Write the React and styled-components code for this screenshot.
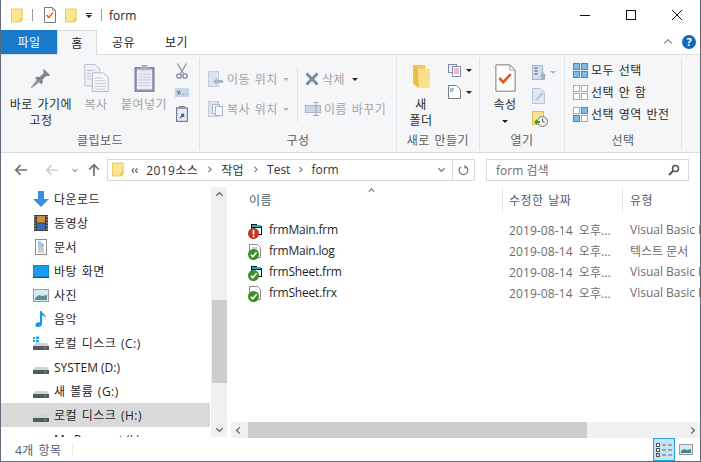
import styled, { createGlobalStyle } from "styled-components";
import { BiChevronUp, BiChevronDown, BiChevronLeft, BiChevronRight } from "react-icons/bi";

const Global = createGlobalStyle`
  html, body { margin: 0; padding: 0; background: #fff; overflow: hidden; }
  body { font-family: "Open Sans", "Noto Sans CJK KR", sans-serif; font-size: 12px; color: #1e1e1e; }
`;

const Window = styled.div`
  width: 701px;
  height: 462px;
  box-sizing: border-box;
  border: 1px solid #5f6b78;
  border-top: 0;
  display: flex;
  flex-direction: column;
  overflow: hidden;
  background: #fff;
`;

const TitleBar = styled.div`
  height: 30px;
  display: flex;
  align-items: center;
  padding-left: 10px;
  gap: 9px;
  flex: none;
`;
const TitleSep = styled.span`
  width: 1px;
  height: 12px;
  background: #9a9a9a;
`;
const QuickDoc = styled.span`
  margin-left: 2px;
  line-height: 0;
`;
const QuickMenu = styled.span`
  display: flex;
  flex-direction: column;
  align-items: center;
  gap: 1px;
  &::before {
    content: "";
    width: 6px;
    height: 1px;
    background: #222;
  }
`;
const TitleText = styled.span`
  font-size: 12px;
  color: #222;
  margin-left: -2px;
`;
const WindowButtons = styled.div`
  margin-left: auto;
  display: flex;
`;
const WindowButton = styled.div`
  width: 46px;
  height: 30px;
  display: flex;
  align-items: center;
  justify-content: center;
`;

const TabRow = styled.div`
  height: 25px;
  display: flex;
  flex: none;
  position: relative;
  border-bottom: 1px solid #dadbdc;
  box-sizing: border-box;
`;
const Tab = styled.div`
  width: ${(p) => p.$w}px;
  box-sizing: border-box;
  display: flex;
  align-items: center;
  justify-content: center;
  font-size: 12px;
  letter-spacing: 0.5px;
  height: ${(p) => (p.$active ? 25 : 24)}px;
  color: ${(p) => (p.$file ? "#fff" : "#222")};
  background: ${(p) => (p.$file ? "#1979ca" : p.$active ? "#f5f6f7" : "transparent")};
  border: ${(p) => (p.$active ? "1px solid #dadbdc" : "0")};
  border-bottom: 0;
  z-index: 1;
`;
const TabTools = styled.div`
  margin-left: auto;
  display: flex;
  align-items: center;
  gap: 5px;
  padding-right: 4px;
  height: 24px;
  color: #9a9a9a;
`;
const HelpBadge = styled.div`
  width: 14px;
  height: 14px;
  border-radius: 50%;
  background: #1368bd;
  color: #fff;
  font-size: 11px;
  font-weight: 700;
  line-height: 14px;
  text-align: center;
`;

const Ribbon = styled.div`
  height: 98px;
  background: #f5f6f7;
  border-bottom: 1px solid #dadbdc;
  box-sizing: border-box;
  display: flex;
  flex: none;
  padding-top: 3px;
  letter-spacing: 0.5px;
  word-spacing: 1px;
`;
const Group = styled.div`
  width: ${(p) => p.$w}px;
  box-sizing: border-box;
  border-right: 1px solid #e1e3e6;
  display: flex;
  flex-direction: column;
  height: 92px;
`;
const GroupBody = styled.div`
  flex: 1;
  display: flex;
  padding-left: ${(p) => p.$pl || 0}px;
  gap: ${(p) => p.$gap || 0}px;
  min-height: 0;
`;
const GroupLabel = styled.div`
  height: 19px;
  line-height: 19px;
  text-align: center;
  color: #5d5d5d;
  font-size: 12px;
  white-space: nowrap;
`;
const LargeButton = styled.div`
  width: ${(p) => p.$w}px;
  display: flex;
  flex-direction: column;
  align-items: center;
  padding-top: 4px;
  line-height: 16px;
  text-align: center;
  white-space: nowrap;
  color: ${(p) => (p.$off ? "#a2a2a2" : "#2b2b2b")};
`;
const LargeIcon = styled.div`
  height: 32px;
  margin-bottom: 3px;
  display: flex;
  align-items: center;
  justify-content: center;
`;
const ArrowLine = styled.div`
  height: 16px;
  display: flex;
  align-items: center;
`;
const SmallColumn = styled.div`
  display: flex;
  flex-direction: column;
  align-items: ${(p) => p.$align || "stretch"};
  gap: ${(p) => p.$gap || 0}px;
  padding-top: ${(p) => p.$pt || 0}px;
  ${(p) => (p.$w ? `width: ${p.$w}px;` : "")}
`;
const SmallButton = styled.div`
  height: ${(p) => p.$h || 22}px;
  display: flex;
  align-items: center;
  gap: 3px;
  white-space: nowrap;
  color: ${(p) => (p.$off ? "#a2a2a2" : "#2b2b2b")};
`;
const Divider = styled.div`
  width: 1px;
  height: 55px;
  background: #dfe1e4;
  margin: 9px 7px 0 7px;
`;
const Arrow = styled.span`
  width: 0;
  height: 0;
  border-left: 3px solid transparent;
  border-right: 3px solid transparent;
  border-top: 3px solid ${(p) => (p.$off ? "#b5b5b5" : "#222")};
  margin-left: ${(p) => p.$ml || 0}px;
  flex: none;
`;

const NavBar = styled.div`
  height: 34px;
  display: flex;
  align-items: center;
  flex: none;
  padding-bottom: 1px;
  box-sizing: border-box;
`;
const NavButtons = styled.div`
  width: 106px;
  padding-left: 13px;
  box-sizing: border-box;
  display: flex;
  align-items: center;
`;
const NavGap = styled.span`
  width: 17px;
`;
const NavRecent = styled(BiChevronDown)`
  margin: 0 7px 0 10px;
  color: #8a8a8a;
`;
const AddressBox = styled.div`
  width: 368px;
  height: 22px;
  box-sizing: border-box;
  border: 1px solid #d9d9d9;
  display: flex;
  align-items: center;
  padding-left: 4px;
  color: #333;
`;
const Crumb = styled.span`
  margin-left: ${(p) => p.$ml || 0}px;
  white-space: nowrap;
  letter-spacing: ${(p) => (p.$ko ? "0.4px" : "0")};
`;
const CrumbChevron = styled(BiChevronRight)`
  margin: 0 ${(p) => p.$m || 5}px;
  color: #777;
`;
const AddressDrop = styled(BiChevronDown)`
  margin-left: auto;
  margin-right: 3px;
  color: #777;
`;
const RefreshCell = styled.div`
  width: 21px;
  height: 20px;
  border-left: 1px solid #d9d9d9;
  display: flex;
  align-items: center;
  justify-content: center;
`;
const SearchBox = styled.div`
  margin-left: 11px;
  width: 203px;
  height: 22px;
  box-sizing: border-box;
  border: 1px solid #d9d9d9;
  display: flex;
  align-items: center;
  justify-content: space-between;
  padding: 0 8px 0 9px;
  color: #6d6d6d;
`;

const Body = styled.div`
  flex: 1;
  display: flex;
  min-height: 0;
`;
const Sidebar = styled.div`
  width: 209px;
  height: 250px;
  overflow: hidden;
  flex: none;
`;
const NavRow = styled.div`
  height: 24px;
  display: flex;
  align-items: center;
  padding-left: 32px;
  gap: 5px;
  white-space: nowrap;
  background: ${(p) => (p.$selected ? "#d9d9d9" : "transparent")};
  color: #1f1f1f;
  letter-spacing: ${(p) => (p.$ko ? "0.5px" : "0")};
  word-spacing: ${(p) => (p.$ko ? "1px" : "0")};
`;
const IconSlot = styled.span`
  width: 16px;
  height: 16px;
  flex: none;
  position: relative;
  display: flex;
  align-items: center;
  justify-content: center;
`;
const FileIconSlot = styled.span`
  width: 14px;
  height: 14px;
  flex: none;
  position: relative;
  display: block;
  line-height: 0;
`;
const VScroll = styled.div`
  width: 16px;
  height: 250px;
  background: #f0f0f0;
  margin-left: 1px;
  flex: none;
  display: flex;
  flex-direction: column;
  align-items: center;
  color: #606060;
`;
const VThumb = styled.div`
  width: 15px;
  height: 83px;
  background: #cdcdcd;
  margin-top: 98px;
  margin-bottom: auto;
`;
const Main = styled.div`
  margin-left: 4px;
  flex: 1;
  min-width: 0;
  display: flex;
  flex-direction: column;
  position: relative;
`;
const SortCaret = styled.div`
  position: absolute;
  left: 134px;
  top: -3px;
  color: #7a7a7a;
  line-height: 0;
`;
const Columns = styled.div`
  display: grid;
  grid-template-columns: 271px 120px 1fr;
  height: 28px;
  color: #4c607a;
  flex: none;
  letter-spacing: 0.5px;
  word-spacing: 1px;
`;
const ColumnHead = styled.div`
  padding-left: ${(p) => p.$pl}px;
  display: flex;
  align-items: center;
  border-left: ${(p) => (p.$sep ? "1px solid #e5e5e5" : "0")};
  white-space: nowrap;
  overflow: hidden;
  margin-bottom: 2px;
`;
const FileList = styled.div`
  flex: 1;
  padding-top: 4px;
  min-height: 0;
`;
const FileRow = styled.div`
  display: grid;
  grid-template-columns: 278px 121px 1fr;
  height: 21px;
  align-items: center;
  white-space: nowrap;
  overflow: hidden;
  color: #6d6d6d;
`;
const FileName = styled.div`
  display: flex;
  align-items: center;
  gap: 6px;
  padding-left: 18px;
  color: #1f1f1f;
  letter-spacing: -0.2px;
`;
const FileDate = styled.span`
  word-spacing: 3px;
  letter-spacing: 0.1px;
`;
const HScroll = styled.div`
  height: 16px;
  background: #f0f0f0;
  flex: none;
  display: flex;
  align-items: center;
  justify-content: space-between;
  position: relative;
  color: #606060;
`;
const HThumb = styled.div`
  position: absolute;
  left: 17px;
  top: 0;
  width: 339px;
  height: 16px;
  background: #cdcdcd;
`;
const StatusBar = styled.div`
  height: 23px;
  flex: none;
  display: flex;
  align-items: center;
  padding: 0 3px 0 14px;
  color: #4c607a;
  letter-spacing: 0.5px;
  word-spacing: 1px;
`;
const StatusSep = styled.span`
  width: 1px;
  height: 14px;
  background: #eee;
  margin-left: 10px;
`;
const ViewButtons = styled.div`
  margin-left: auto;
  display: flex;
  align-items: center;
`;
const ViewButton = styled.div`
  width: 22px;
  height: 23px;
  box-sizing: border-box;
  display: flex;
  align-items: center;
  justify-content: center;
  border: 1px solid ${(p) => (p.$active ? "#27a0e0" : "transparent")};
  background: ${(p) => (p.$active ? "#c4e4f7" : "transparent")};
`;
const BadgeSlot = styled.span`
  position: absolute;
  left: -1px;
  bottom: -2px;
  line-height: 0;
`;

const Folder = ({ w = 14, h = 16 }) => (
  <svg width={w} height={h} viewBox="0 0 14 16">
    <path d="M.5.5h12.500v13.500l-2.500 1.500H.5z" fill="#fde68f" stroke="#e7c04d" />
    <path d="M10.500 15.500V11.500h2.500" fill="#fbd465" stroke="#e7c04d" />
  </svg>
);
const CheckDoc = ({ w = 12, h = 16, stroke = 1 }) => (
  <svg width={w} height={h} viewBox="0 0 12 16">
    <path d="M.5.5h8l3 3v12H.5z" fill="#fff" stroke="#7b7b7b" strokeWidth={stroke} vectorEffect="non-scaling-stroke" />
    <path d="M8.500.5v3h3" fill="none" stroke="#a0a0a0" vectorEffect="non-scaling-stroke" />
    <path d="M2.500 8l2.200 2.400L9 5.800" fill="none" stroke="#e8591a" strokeWidth="1.500" />
  </svg>
);
const Pin = () => (
  <svg width="22" height="22" viewBox="0 0 24 24">
    <path d="M15 2l7 7-2 1-2-.5-4.500 4.500.5 3-1.500 2-7-7 2-1.500 3 .5L15 6.500 14.500 4z" fill="#7d8793" />
    <path d="M8 13l3 3-9 7-1-1z" fill="#8e96a1" />
  </svg>
);
const CopyIcon = () => (
  <svg width="25" height="28" viewBox="0 0 26 30">
    <path d="M.5.5h11l5 5v18H.5z" fill="#eef1f6" stroke="#b4bfd0" />
    <path d="M8.500 9.500h12l5 5v15H8.500z" fill="#f7f8fb" stroke="#a7b3c7" />
    <path d="M11 15h9M11 18h12M11 21h12M11 24h12M11 27h12M3 7h8M3 10h4M3 13h4M3 16h4" stroke="#b9c3d4" />
  </svg>
);
const PasteIcon = () => (
  <svg width="21" height="30" viewBox="0 0 22 30">
    <rect x="1" y="4" width="20" height="25" fill="#8496b1" stroke="#76869e" />
    <rect x="3" y="6" width="16" height="21" fill="#e8ecf5" />
    <path d="M8 4V1.500h6V4h2v3H6V4z" fill="#a7b3c5" />
    <path d="M5 11h12M5 14h12M5 17h12M5 20h12M5 23h12" stroke="#c5cde0" />
  </svg>
);
const Scissors = () => (
  <svg width="12" height="16" viewBox="0 0 12 16">
    <path d="M1.500.5l6 10M10.500.5l-6 10" stroke="#8793a6" strokeWidth="1.300" />
    <circle cx="3" cy="13" r="2.200" fill="none" stroke="#7688a3" strokeWidth="1.300" />
    <circle cx="9" cy="13" r="2.200" fill="none" stroke="#7688a3" strokeWidth="1.300" />
  </svg>
);
const PathTag = () => (
  <svg width="16" height="9" viewBox="0 0 16 10">
    <rect width="16" height="10" fill="#c9d6e8" />
    <path d="M3 3l1 4 1-4 1 4M9 7h1M12 7h1" stroke="#5d6e88" fill="none" />
  </svg>
);
const ShortcutPaste = () => (
  <svg width="12" height="16" viewBox="0 0 12 16">
    <rect x=".5" y="2" width="11" height="13.500" fill="#e9edf5" stroke="#6f7f98" strokeWidth="1.400" />
    <path d="M3.500 2V.5h5V2" fill="none" stroke="#6f7f98" />
    <path d="M4 12l3-3M5 8.500h2.500V11" stroke="#4a5f80" strokeWidth="1.400" fill="none" />
  </svg>
);
const MoveIcon = ({ copy }) => (
  <svg width="16" height="16" viewBox="0 0 16 16">
    <rect x=".5" y=".5" width="10" height="15" fill="#dde4f0" stroke="#c2cde0" />
    {copy ? (
      <>
        <rect x="4.500" y="3.500" width="7" height="9" fill="#f1f4f9" stroke="#a9b4c6" />
        <rect x="7.500" y="5.500" width="7" height="9" fill="#f6f8fb" stroke="#a9b4c6" />
      </>
    ) : (
      <path d="M15 9H9V7l-4 3.500L9 14v-2h6z" fill="#a9b4c6" />
    )}
  </svg>
);
const DeleteX = () => (
  <svg width="14" height="14" viewBox="0 0 14 14">
    <path d="M1.500 1.500l11 11M12.500 1.500l-11 11" stroke="#7c8ca8" strokeWidth="3" />
  </svg>
);
const RenameIcon = () => (
  <svg width="16" height="14" viewBox="0 0 16 14">
    <rect x=".5" y="3.500" width="15" height="7" fill="#ccd6e6" stroke="#a9b6ca" />
    <path d="M11 .5v13M8.500.5h5M8.500 13.500h5" stroke="#9aa7bb" />
  </svg>
);
const NewFolder = () => (
  <svg width="19" height="28" viewBox="0 0 18 30">
    <path d="M0 1h13v21l-1 2v2L0 21z" fill="#f2c84f" />
    <path d="M5 5l13 0v17c0 3-1 4-4 4H6z" fill="#fbe08a" />
    <path d="M0 1l5 4 1 21L0 21z" fill="#e9bf46" />
  </svg>
);
const NewItem = () => (
  <svg width="15" height="13" viewBox="0 0 15 13">
    <rect x=".5" y=".5" width="8" height="8" fill="#eef2f8" stroke="#7c8ca8" />
    <rect x="4.500" y="2.500" width="8" height="10" fill="#fff" stroke="#7c8ca8" />
    <path d="M6 5h5M6 7h5M6 9h5" stroke="#e2717d" />
  </svg>
);
const EasyAccess = () => (
  <svg width="13" height="14" viewBox="0 0 13 14">
    <path d="M.5.5h8l4 4v9H.5z" fill="#fff" stroke="#7b7b7b" />
    <path d="M2 4h4M2 6h3" stroke="#2a83d8" />
  </svg>
);
const OpenStack = () => (
  <svg width="15" height="15" viewBox="0 0 15 15">
    <rect x=".5" y=".5" width="10" height="14" fill="#d5deec" stroke="#a7b5cb" />
    <path d="M2.500 3h3M2.500 6h3M2.500 9h3" stroke="#8494ad" strokeWidth="2" />
    <path d="M11 7l3.500 4H13v4H9v-4H7.500z" fill="#a7b5cb" />
  </svg>
);
const EditDoc = () => (
  <svg width="13" height="16" viewBox="0 0 13 16">
    <path d="M.5.5h8l4 4v11H.5z" fill="#e1e8f3" stroke="#b9c5d8" />
    <path d="M3 13l1-3 6-6 2 2-6 6z" fill="#bdc9dc" />
  </svg>
);
const HistoryIcon = () => (
  <svg width="16" height="16" viewBox="0 0 16 16">
    <rect x=".5" y=".5" width="11" height="13" fill="#fbe28e" stroke="#e3bf52" />
    <circle cx="10.500" cy="10.500" r="5" fill="#eee" stroke="#7b7b7b" />
    <path d="M10.500 7.500v3l2 1" stroke="#555" fill="none" />
    <path d="M2 11l3-3v2h3v2H5v2z" fill="#3b9d2a" />
  </svg>
);
const SelectGrid = ({ filled }) => (
  <svg width="15" height="15" viewBox="0 0 15 15">
    {[0, 8].map((y) =>
      [0, 8].map((x) => {
        const on = filled === "all" || (filled === "invert" && (x === 8) === (y === 0));
        return (
          <rect
            key={`${x}-${y}`}
            x={x + 0.5}
            y={y + 0.5}
            width="6"
            height="6"
            fill={on ? "#79bcee" : "#fff"}
            stroke={on ? "#2e8fdc" : "#a9a9a9"}
          />
        );
      })
    )}
  </svg>
);

const NavBack = ({ color }) => (
  <svg width="14" height="12" viewBox="0 0 14 12">
    <path d="M13 6H2M6.500 1.200L1.800 6l4.700 4.800" fill="none" stroke={color} strokeWidth="1.700" />
  </svg>
);
const NavUp = () => (
  <svg width="12" height="13" viewBox="0 0 12 13">
    <path d="M6 13V2M1.200 6.500L6 1.800l4.800 4.700" fill="none" stroke="#707070" strokeWidth="1.700" />
  </svg>
);
const Refresh = () => (
  <svg width="11" height="12" viewBox="0 0 11 12">
    <path d="M8.800 3.500A4.300 4.300 0 1 1 3 2.700" fill="none" stroke="#707070" strokeWidth="1.200" />
    <path d="M6.500.5v4l3-.5z" fill="#707070" />
  </svg>
);
const SearchIcon = () => (
  <svg width="12" height="12" viewBox="0 0 12 12">
    <circle cx="7.500" cy="4.500" r="3" fill="none" stroke="#555" strokeWidth="1.500" />
    <path d="M5.200 6.800L1 11" stroke="#555" strokeWidth="2" />
  </svg>
);

const DownloadIcon = () => (
  <svg width="16" height="16" viewBox="0 0 16 16">
    <path d="M5 0h6v8h5l-8 8-8-8h5z" fill="#3a8ee0" />
  </svg>
);
const VideoIcon = () => (
  <svg width="14" height="16" viewBox="0 0 14 16">
    <rect width="14" height="16" fill="#3f3f3f" />
    <path d="M1 1v14M13 1v14" stroke="#c8c8c8" strokeDasharray="1.500 1.500" />
    <rect x="3" y="1" width="8" height="6.500" fill="#d98b2b" />
    <rect x="3" y="8.500" width="8" height="6.500" fill="#2f6fc0" />
    <rect x="5" y="2" width="3" height="3" fill="#6ba7d8" />
  </svg>
);
const DocumentsIcon = () => (
  <svg width="12" height="16" viewBox="0 0 12 16">
    <rect x=".5" y=".5" width="11" height="15" fill="#fff" stroke="#8c8c8c" />
    <path d="M3 3h3M3 5h6M3 7h6" stroke="#4a8bd1" />
    <path d="M3 9h6M3 11h6M3 13h6" stroke="#9c9c9c" />
  </svg>
);
const DesktopIcon = () => (
  <svg width="16" height="13" viewBox="0 0 16 13">
    <rect width="16" height="12" fill="#1b9bf0" stroke="#0b6fc0" />
    <path d="M0 12.500h16" stroke="#17527f" />
  </svg>
);
const PhotoIcon = () => (
  <svg width="16" height="13" viewBox="0 0 16 13">
    <rect x=".5" y=".5" width="15" height="12" fill="#d5e8f3" stroke="#9c9c9c" />
    <path d="M2 9l4-3 3 1 5-1v5H2z" fill="#5d8f86" />
  </svg>
);
const MusicIcon = () => (
  <svg width="12" height="16" viewBox="0 0 12 16">
    <path d="M5 0h1.500c.5 3 4.500 3.500 4.500 7-1-1.500-2.500-2.500-4-2.500V13c0 2-2 3-4 3s-3-1-2.500-2.500C1 12 3 11 5 11.500z" fill="#0f97ee" />
  </svg>
);
const DriveIcon = ({ win }) => (
  <svg width="16" height="16" viewBox="0 0 16 16">
    {win && <path d="M0 2h2v2H0zM3 1.500h3V4H3zM0 5h2v2H0zM3 5h3v2.500H3z" fill="#22a7ee" />}
    <path d="M2 8h12l2 3H0z" fill="#cfd3d6" />
    <rect y="11" width="16" height="4" fill="#525a5f" />
    <rect x="11" y="12.500" width="2" height="1" fill="#46d94a" />
  </svg>
);
const TplFile = () => (
  <svg width="14" height="14" viewBox="0 0 14 14">
    <path d="M2 1h6v2h5v9H2z" fill="#111" />
    <rect x="3" y="2" width="9" height="2" fill="#16b6d8" />
    <rect x="3" y="5" width="9" height="6" fill="#fff" />
  </svg>
);
const TextFile = () => (
  <svg width="12" height="14" viewBox="0 0 12 14">
    <path d="M.5.5h8l3 3v10H.5z" fill="#fff" stroke="#8c8c8c" />
    <path d="M3 4h5M3 6h6M3 8h6M3 10h6" stroke="#9c9c9c" />
  </svg>
);
const PlainFile = () => (
  <svg width="12" height="14" viewBox="0 0 12 14">
    <path d="M.5.5h8l3 3v10H.5z" fill="#fff" stroke="#8c8c8c" />
  </svg>
);
const OkBadge = () => (
  <svg width="11" height="11" viewBox="0 0 10 10">
    <circle cx="5" cy="5" r="5" fill="#3c8f25" />
    <path d="M2.500 5.200l1.800 1.800L7.800 3" fill="none" stroke="#fff" strokeWidth="1.500" />
  </svg>
);
const WarnBadge = () => (
  <svg width="11" height="11" viewBox="0 0 10 10">
    <circle cx="5" cy="5" r="5" fill="#c8341c" />
    <path d="M5 1.800v4M5 6.800v1.500" stroke="#fff" strokeWidth="1.500" />
  </svg>
);
const DetailsView = () => (
  <svg width="17" height="14" viewBox="0 0 17 14">
    <rect x=".5" y=".5" width="3" height="3" fill="#fff" stroke="#555" />
    <rect x=".5" y="5.500" width="3" height="3" fill="#fff" stroke="#555" />
    <rect x=".5" y="10.500" width="3" height="3" fill="#fff" stroke="#555" />
    <rect x="1.500" y="11.500" width="1" height="1" fill="#c33" />
    <path d="M6 2h4M12 2h4M6 7h4M12 7h4M6 12h4M12 12h4" stroke="#666" />
  </svg>
);
const ThumbView = () => (
  <svg width="14" height="11" viewBox="0 0 14 11">
    <rect x=".5" y=".5" width="13" height="10" fill="#d8ecf6" stroke="#9a9a9a" />
    <path d="M2 7l3-2 3 1 4-1v4H2z" fill="#3f8a8a" />
  </svg>
);

const navItems = [
  { label: "다운로드", icon: <DownloadIcon /> },
  { label: "동영상", icon: <VideoIcon /> },
  { label: "문서", icon: <DocumentsIcon /> },
  { label: "바탕 화면", icon: <DesktopIcon /> },
  { label: "사진", icon: <PhotoIcon /> },
  { label: "음악", icon: <MusicIcon /> },
  { label: "로컬 디스크 (C:)", icon: <DriveIcon win /> },
  { label: "SYSTEM (D:)", icon: <DriveIcon /> },
  { label: "새 볼륨 (G:)", icon: <DriveIcon /> },
  { label: "로컬 디스크 (H:)", icon: <DriveIcon />, selected: true },
  { label: "My Passport (I:)", icon: <DriveIcon /> },
];

const files = [
  { name: "frmMain.frm", type: "Visual Basic Form", icon: <TplFile />, badge: <WarnBadge /> },
  { name: "frmMain.log", type: "텍스트 문서", icon: <TextFile />, badge: <OkBadge /> },
  { name: "frmSheet.frm", type: "Visual Basic Form", icon: <TplFile />, badge: <OkBadge /> },
  { name: "frmSheet.frx", type: "Visual Basic Form", icon: <PlainFile />, badge: <OkBadge /> },
];

export default function App() {
  return (
    <Window>
      <Global />
      <TitleBar>
        <Folder w={12} h={15} />
        <TitleSep />
        <QuickDoc><CheckDoc /></QuickDoc>
        <Folder w={12} h={15} />
        <QuickMenu><Arrow /></QuickMenu>
        <TitleSep />
        <TitleText>form</TitleText>
        <WindowButtons>
          <WindowButton>
            <svg width="10" height="10" viewBox="0 0 10 10"><path d="M0 5.500h10" stroke="#111" /></svg>
          </WindowButton>
          <WindowButton>
            <svg width="10" height="10" viewBox="0 0 10 10"><rect x=".5" y=".5" width="9" height="9" fill="none" stroke="#111" /></svg>
          </WindowButton>
          <WindowButton>
            <svg width="10" height="10" viewBox="0 0 10 10"><path d="M0 0l10 10M10 0L0 10" stroke="#111" /></svg>
          </WindowButton>
        </WindowButtons>
      </TitleBar>

      <TabRow>
        <Tab $file $w={56}>파일</Tab>
        <Tab $active $w={40}>홈</Tab>
        <Tab $w={53}>공유</Tab>
        <Tab $w={53}>보기</Tab>
        <TabTools>
          <BiChevronUp size={18} />
          <HelpBadge>?</HelpBadge>
        </TabTools>
      </TabRow>

      <Ribbon>
        <Group $w={199}>
          <GroupBody $pl={5}>
            <LargeButton $w={70}>
              <LargeIcon><Pin /></LargeIcon>
              <span>바로 가기에</span>
              <span>고정</span>
            </LargeButton>
            <LargeButton $off $w={40}>
              <LargeIcon><CopyIcon /></LargeIcon>
              <span>복사</span>
            </LargeButton>
            <LargeButton $off $w={56}>
              <LargeIcon><PasteIcon /></LargeIcon>
              <span>붙여넣기</span>
            </LargeButton>
            <SmallColumn $pt={5} $gap={9} $w={20} $align="center">
              <Scissors />
              <PathTag />
              <ShortcutPaste />
            </SmallColumn>
          </GroupBody>
          <GroupLabel>클립보드</GroupLabel>
        </Group>
        <Group $w={197}>
          <GroupBody $pl={8}>
            <SmallColumn $pt={10} $gap={8} $w={82}>
              <SmallButton $off><MoveIcon /> 이동 위치 <Arrow $off $ml={2} /></SmallButton>
              <SmallButton $off><MoveIcon copy /> 복사 위치 <Arrow $off $ml={2} /></SmallButton>
            </SmallColumn>
            <Divider />
            <SmallColumn $pt={10} $gap={8}>
              <SmallButton $off><DeleteX /> 삭제 <Arrow $ml={4} /></SmallButton>
              <SmallButton $off><RenameIcon /> 이름 바꾸기</SmallButton>
            </SmallColumn>
          </GroupBody>
          <GroupLabel>구성</GroupLabel>
        </Group>
        <Group $w={83}>
          <GroupBody $pl={6} $gap={9}>
            <LargeButton $w={36}>
              <LargeIcon><NewFolder /></LargeIcon>
              <span>새</span>
              <span>폴더</span>
            </LargeButton>
            <SmallColumn $pt={2} $gap={2}>
              <SmallButton $h={20}><NewItem /><Arrow /></SmallButton>
              <SmallButton $h={20}><EasyAccess /><Arrow $ml={2} /></SmallButton>
            </SmallColumn>
          </GroupBody>
          <GroupLabel>새로 만들기</GroupLabel>
        </Group>
        <Group $w={85}>
          <GroupBody $pl={8} $gap={10}>
            <LargeButton $w={34}>
              <LargeIcon><CheckDoc w={21} h={28} /></LargeIcon>
              <span>속성</span>
              <ArrowLine><Arrow /></ArrowLine>
            </LargeButton>
            <SmallColumn $pt={3}>
              <SmallButton $h={23}><OpenStack /><Arrow $off /></SmallButton>
              <SmallButton $h={23}><EditDoc /></SmallButton>
              <SmallButton $h={23}><HistoryIcon /></SmallButton>
            </SmallColumn>
          </GroupBody>
          <GroupLabel>열기</GroupLabel>
        </Group>
        <Group $w={117}>
          <GroupBody $pl={8}>
            <SmallColumn $pt={1}>
              <SmallButton><SelectGrid filled="all" /> 모두 선택</SmallButton>
              <SmallButton><SelectGrid /> 선택 안 함</SmallButton>
              <SmallButton><SelectGrid filled="invert" /> 선택 영역 반전</SmallButton>
            </SmallColumn>
          </GroupBody>
          <GroupLabel>선택</GroupLabel>
        </Group>
      </Ribbon>

      <NavBar>
        <NavButtons>
          <NavBack color="#707070" />
          <NavGap />
          <NavBack color="#cfcfcf" />
          <NavRecent size={12} />
          <NavUp />
        </NavButtons>
        <AddressBox>
          <Folder w={12} h={15} />
          <Crumb $ml={7}>‹‹</Crumb>
          <Crumb $ml={8} $ko>2019소스</Crumb>
          <CrumbChevron size={13} />
          <Crumb $ko>작업</Crumb>
          <CrumbChevron size={13} />
          <Crumb>Test</Crumb>
          <CrumbChevron size={13} $m={4} />
          <Crumb>form</Crumb>
          <AddressDrop size={15} />
          <RefreshCell><Refresh /></RefreshCell>
        </AddressBox>
        <SearchBox>
          <span>form 검색</span>
          <SearchIcon />
        </SearchBox>
      </NavBar>

      <Body>
        <Sidebar>
          {navItems.map((item) => (
            <NavRow key={item.label} $selected={item.selected} $ko={/[가-힣]/.test(item.label)}>
              <IconSlot>{item.icon}</IconSlot>
              <span>{item.label}</span>
            </NavRow>
          ))}
        </Sidebar>
        <VScroll>
          <BiChevronUp size={15} />
          <VThumb />
          <BiChevronDown size={15} />
        </VScroll>
        <Main>
          <SortCaret><BiChevronUp size={13} /></SortCaret>
          <Columns>
            <ColumnHead $pl={18}>이름</ColumnHead>
            <ColumnHead $sep $pl={6}>수정한 날짜</ColumnHead>
            <ColumnHead $sep $pl={7}>유형</ColumnHead>
          </Columns>
          <FileList>
            {files.map((file) => (
              <FileRow key={file.name}>
                <FileName>
                  <FileIconSlot>
                    {file.icon}
                    <BadgeSlot>{file.badge}</BadgeSlot>
                  </FileIconSlot>
                  <span>{file.name}</span>
                </FileName>
                <FileDate>2019-08-14 오후...</FileDate>
                <span>{file.type}</span>
              </FileRow>
            ))}
          </FileList>
          <HScroll>
            <BiChevronLeft size={15} />
            <HThumb />
            <BiChevronRight size={15} />
          </HScroll>
        </Main>
      </Body>

      <StatusBar>
        <span>4개 항목</span>
        <StatusSep />
        <ViewButtons>
          <ViewButton $active><DetailsView /></ViewButton>
          <ViewButton><ThumbView /></ViewButton>
        </ViewButtons>
      </StatusBar>
    </Window>
  );
}
